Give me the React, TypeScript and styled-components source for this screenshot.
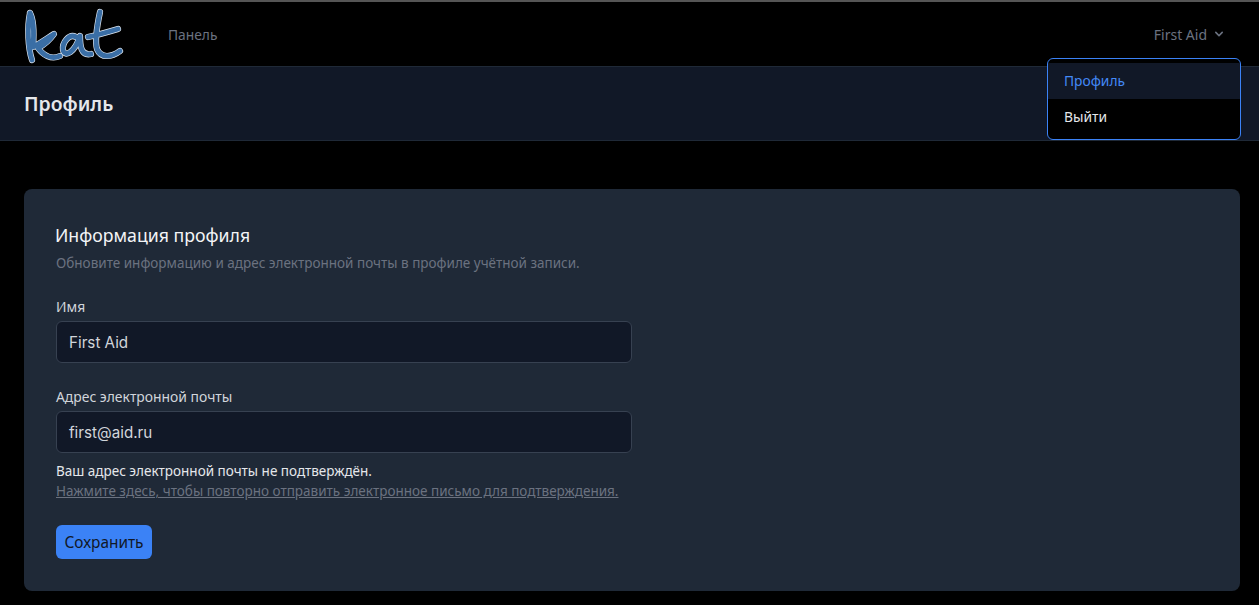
import React from "react";
import styled, { createGlobalStyle } from "styled-components";

const Global = createGlobalStyle`
  html, body { margin: 0; padding: 0; background: #000; height: 605px; overflow: hidden; }
  body { font-family: "Noto Sans", "Open Sans", sans-serif; }
  * { box-sizing: border-box; }
`;
const Page = styled.div`
  border-top: 2px solid #555;
  position: relative;
`;
const Nav = styled.nav`
  height: 64px;
  display: flex;
  align-items: center;
  justify-content: space-between;
  padding: 0 32px 0 24px;
  background: #000;
`;
const Left = styled.div`
  display: flex;
  align-items: center;
  gap: 42px;
`;
const NavLink = styled.a`
  font-size: 13.8px;
  color: #6b7280;
`;
const UserButton = styled.div`
  display: flex;
  align-items: center;
  gap: 4px;
  font-size: 14px;
  color: #6b7280;
`;
const Menu = styled.div`
  position: absolute;
  top: 56px;
  left: 1047px;
  width: 194px;
  height: 82px;
  border: 1px solid #3b82f6;
  border-radius: 6px;
  background: #000;
  padding: 4px 0;
  z-index: 2;
  overflow: hidden;
`;
const MenuItem = styled.div<{ $active?: boolean }>`
  height: 36px;
  display: flex;
  align-items: center;
  padding: 0 16px 2px;
  font-size: 13.8px;
  color: ${(p) => (p.$active ? "#4389f6" : "#e5e7eb")};
  background: ${(p) => (p.$active ? "#111827" : "transparent")};
`;
const Header = styled.header`
  height: 75px;
  display: flex;
  align-items: center;
  padding: 0 24px;
  background: #111827;
  border-top: 1px solid #1f2937;
  border-bottom: 1px solid #1f2937;
`;
const PageTitle = styled.h2`
  margin: 0;
  font-size: 19.4px;
  font-weight: 600;
  color: #e5e7eb;
`;
const Main = styled.main`
  padding: 48px 19px 0 24px;
`;
const Card = styled.section`
  height: 402px;
  padding: 32px;
  background: #1f2937;
  border-radius: 8px;
`;
const CardTitle = styled.h3`
  margin: 0 0 0 -1px;
  font-size: 17.7px;
  line-height: 28px;
  font-weight: 400;
  color: #f3f4f6;
`;
const CardSub = styled.p`
  margin: 4px 0 0;
  font-size: 13.5px;
  line-height: 20px;
  color: #6b7280;
`;
const Field = styled.div<{ $gap: number }>`
  width: 576px;
  margin-top: ${(p) => p.$gap}px;
`;
const Label = styled.label`
  display: block;
  font-size: 13.9px;
  line-height: 20px;
  font-weight: 400;
  color: #d1d5db;
`;
const Input = styled.div`
  margin-top: 4px;
  height: 42px;
  display: flex;
  align-items: center;
  padding: 0 12px;
  font-family: "Inter", sans-serif;
  font-size: 15.2px;
  color: #d1d5db;
  background: #111827;
  border: 1px solid #374151;
  border-radius: 6px;
`;
const Note = styled.p`
  margin: 8px 0 0;
  font-size: 13.5px;
  line-height: 20px;
  color: #e5e7eb;
`;
const ResendLink = styled.a`
  display: block;
  font-size: 13.5px;
  line-height: 20px;
  color: #6b7280;
  text-decoration: underline;
`;
const Save = styled.button`
  display: block;
  margin-top: 24px;
  width: 96px;
  height: 34px;
  padding: 0;
  border: 0;
  border-radius: 6px;
  background: #3b82f6;
  color: #111827;
  font-family: inherit;
  font-size: 15.4px;
`;

const Logo = () => {
  const d = [
    "M30 11 C27 25 28 46 32 58 M30 11 C34 18 34 32 33 45 C41 41 49 35 54 32 C49 39 44 43 38 46 C43 53 51 58 60 54",
    "M76 35 C69 31 62 41 63 48 C65 56 75 50 80 34 C80 44 81 54 91 52",
    "M100 10 C97 24 95 40 97 47 C101 57 112 55 120 49 M88 35 C97 33 108 30 118 27",
  ];
  return (
    <svg width="102" height="60" viewBox="24 2 102 60" fill="none" strokeLinecap="round" strokeLinejoin="round">
      {d.map((p) => <path key={p + "o"} d={p} stroke="#dfe7f0" strokeWidth="6.2" />)}
      {d.map((p) => <path key={p} d={p} stroke="#3a6ea5" strokeWidth="4.9" />)}
    </svg>
  );
};

const Chevron = () => (
  <svg width="16" height="16" viewBox="0 0 20 20" fill="#6b7280">
    <path fillRule="evenodd" clipRule="evenodd" d="M5.293 7.293a1 1 0 011.414 0L10 10.586l3.293-3.293a1 1 0 111.414 1.414l-4 4a1 1 0 01-1.414 0l-4-4a1 1 0 010-1.414z" />
  </svg>
);

export default function App() {
  return (
    <Page>
      <Global />
      <Nav>
        <Left>
          <Logo />
          <NavLink>Панель</NavLink>
        </Left>
        <UserButton>First Aid <Chevron /></UserButton>
      </Nav>
      <Menu>
        <MenuItem $active>Профиль</MenuItem>
        <MenuItem>Выйти</MenuItem>
      </Menu>
      <Header><PageTitle>Профиль</PageTitle></Header>
      <Main>
        <Card>
          <CardTitle>Информация профиля</CardTitle>
          <CardSub>Обновите информацию и адрес электронной почты в профиле учётной записи.</CardSub>
          <Field $gap={24}>
            <Label>Имя</Label>
            <Input>First Aid</Input>
          </Field>
          <Field $gap={24}>
            <Label>Адрес электронной почты</Label>
            <Input>first@aid.ru</Input>
            <Note>Ваш адрес электронной почты не подтверждён.</Note>
            <ResendLink>Нажмите здесь, чтобы повторно отправить электронное письмо для подтверждения.</ResendLink>
          </Field>
          <Save>Сохранить</Save>
        </Card>
      </Main>
    </Page>
  );
}
